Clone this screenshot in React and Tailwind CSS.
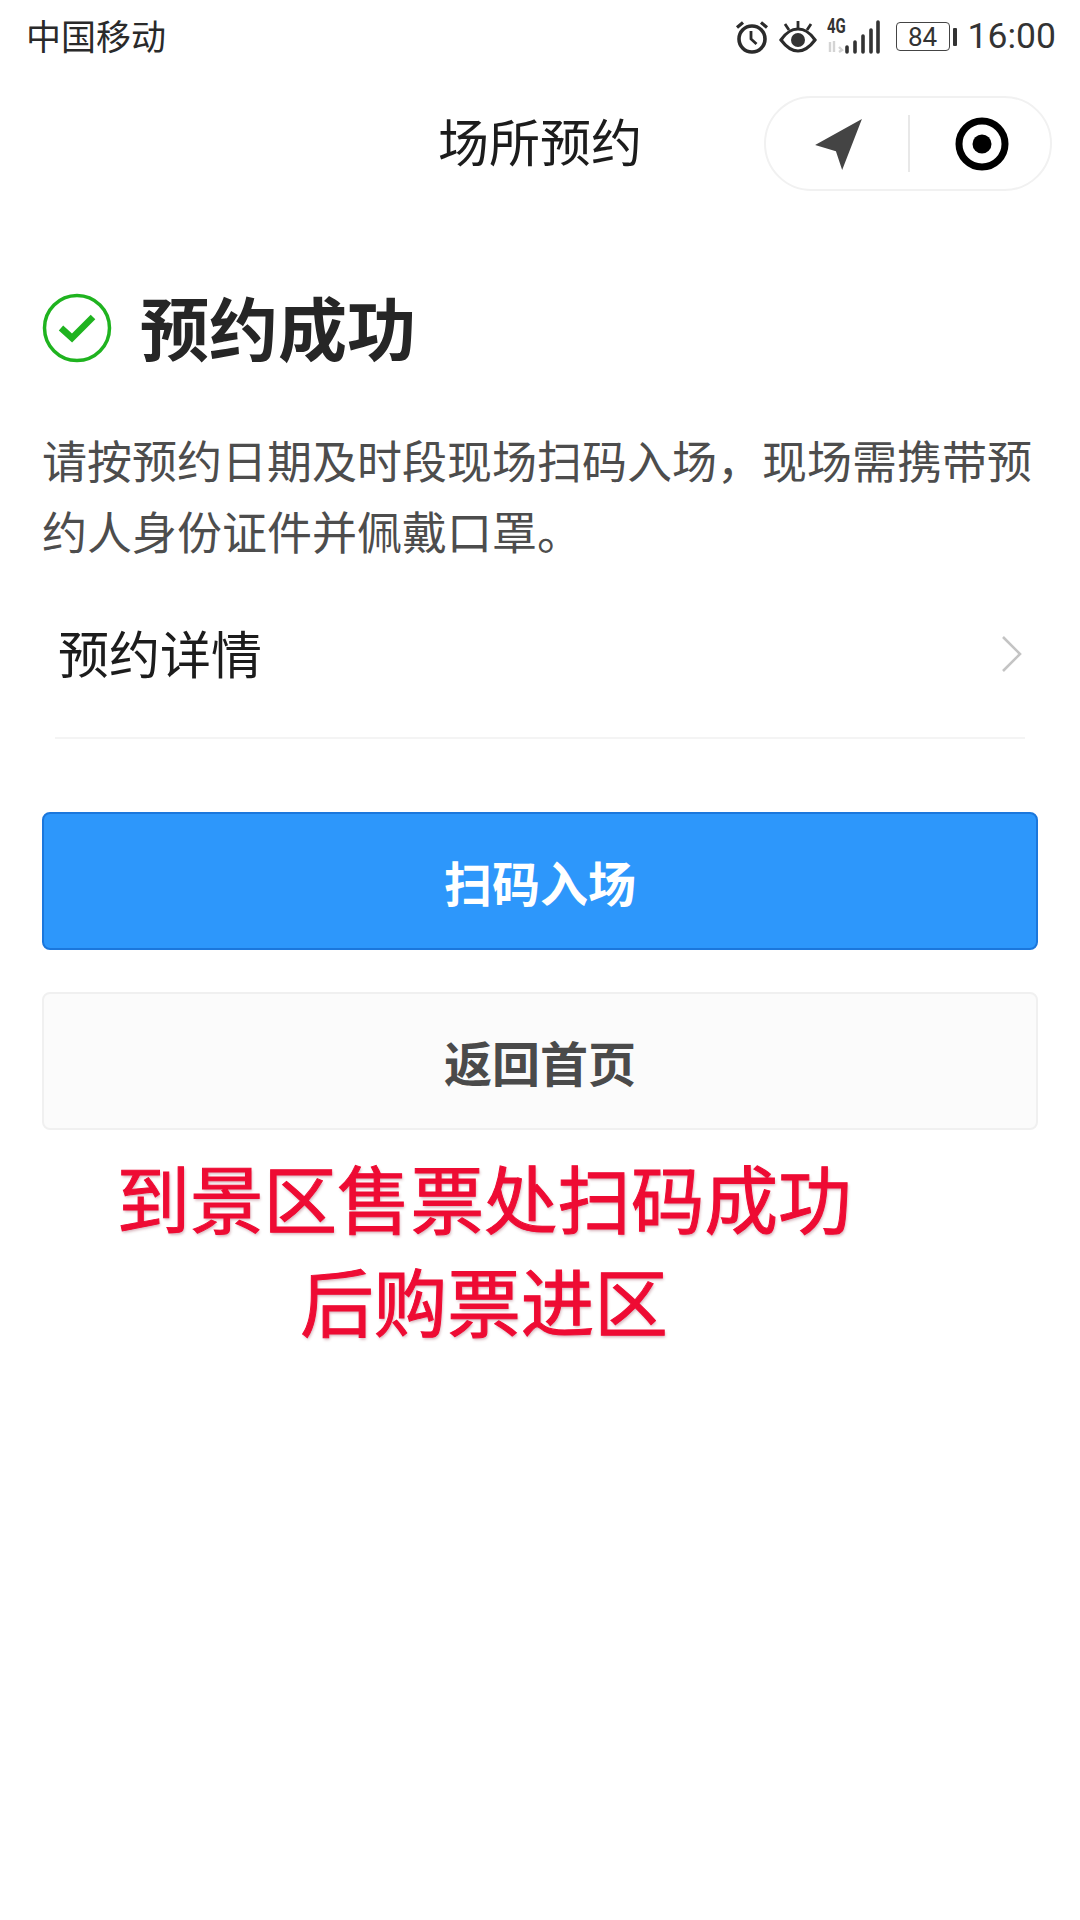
import React from "react";

const cjk = "font-['Noto_Sans_CJK_SC','Noto_Sans',sans-serif]";

function StatusIcons() {
  return (
    <div className="flex items-center mt-[3px]">
      <svg width="36" height="36" viewBox="0 0 36 36" className="mr-[9px]">
        <circle cx="18" cy="20" r="13" fill="none" stroke="#2b2b2b" strokeWidth="3.6" />
        <path d="M17 12v8l5.5 5" fill="none" stroke="#2b2b2b" strokeWidth="2.8" />
        <path d="M3 8.5 9 3.5M33 8.5 27 3.5" stroke="#2b2b2b" strokeWidth="3.2" />
      </svg>
      <svg width="38" height="36" viewBox="0 0 38 36" className="mr-[10px]">
        <path d="M2 21C8 12 13 10 19 10s11 2 17 11c-6 8-11 11-17 11S8 29 2 21Z" fill="none" stroke="#2b2b2b" strokeWidth="3.2" />
        <circle cx="19" cy="21" r="7" fill="#333" />
        <path d="M19 2v7M6 5l4 6M32 5l-4 6" stroke="#2b2b2b" strokeWidth="2.8" />
      </svg>
      <div className="relative w-[54px] h-[36px] mr-[15px]">
        <span className="absolute left-0 top-[-4px] text-[20px] leading-[22px] font-bold text-[#333] font-['Roboto',sans-serif] scale-x-75 origin-left">4G</span>
        <svg width="54" height="36" viewBox="0 0 54 36" className="absolute left-0 top-0">
          <path d="M3 33V23M7 33V22M12 28l3 3-3 2" stroke="#d4d4d4" strokeWidth="2.4" fill="none" />
          <path d="M21 28v5M29 23v10M37 17v16M45 11v22M52 3v30" transform="translate(-1 0)" stroke="#333" strokeWidth="3.6" strokeLinecap="round" />
        </svg>
      </div>
      <div className="w-[54px] h-[29px] border border-[#444] rounded-[4px] flex items-center justify-center text-[26px] leading-none text-[#333] font-['Roboto',sans-serif]">84</div>
      <div className="w-[4px] h-[18px] bg-[#333] rounded-[1px] ml-[3px] mr-[11px]" />
      <span className="text-[35.5px] leading-none text-[#333] font-['Roboto',sans-serif]">16:00</span>
    </div>
  );
}

function Button({ className, children }) {
  return (
    <div className={`mx-[42px] flex items-center justify-center rounded-[8px] border-2 font-bold text-[48px] leading-none ${className}`}>
      {children}
    </div>
  );
}

export default function App() {
  return (
    <div className={`w-[1080px] h-[1920px] bg-white overflow-hidden ${cjk}`}>
      <div className="h-[70px] flex items-center justify-between pl-[26px] pr-[24px]">
        <span className="text-[35px] leading-none text-[#2a2a2a] mb-[2px]">中国移动</span>
        <StatusIcons />
      </div>

      <div className="relative h-[95px] mt-[26px] flex items-center justify-center">
        <span className="text-[51px] leading-none text-[#1c1c1c] mb-[6px]">场所预约</span>
        <div className="absolute left-[764px] top-0 w-[288px] h-[95px] rounded-full border-2 border-[#f1f1f1] flex items-center">
          <div className="w-[142px] flex justify-center">
            <svg width="52" height="52" viewBox="0 0 50 50" className="ml-[2px]">
              <path d="M48 1 3 26l20 6 6 18Z" fill="#444" />
            </svg>
          </div>
          <div className="w-[2px] h-[57px] bg-[#e8e8e8]" />
          <div className="flex-1 flex justify-center">
            <svg width="54" height="54" viewBox="0 0 54 54" className="ml-[3px]">
              <circle cx="27" cy="27" r="23" fill="none" stroke="#000" strokeWidth="7" />
              <circle cx="27" cy="27" r="9.5" fill="#000" />
            </svg>
          </div>
        </div>
      </div>

      <div className="flex items-center mt-[94px] ml-[42px] h-[88px]">
        <svg width="70" height="70" viewBox="0 0 70 70" className="mb-[2px]">
          <circle cx="35" cy="35" r="32.5" fill="none" stroke="#1fb31f" strokeWidth="3.5" />
          <path d="M19 35l11 10 21-21" fill="none" stroke="#1fb31f" strokeWidth="6.5" />
        </svg>
        <h1 className="ml-[28px] mb-[6px] text-[69px] leading-none font-bold text-[#262626]">预约成功</h1>
      </div>

      <p className="mt-[51px] mx-[42px] w-[1000px] text-[45px] leading-[71px] text-[#4d4d4d]">
        请按预约日期及时段现场扫码入场，现场需携带预约人身份证件并佩戴口罩。
      </p>

      <div className="mx-[55px] mt-[9px] h-[164px] border-b-2 border-[#f4f4f4] flex items-center justify-between pb-[4px]">
        <span className="ml-[3px] mb-[4px] text-[51px] leading-none text-[#1c1c1c]">预约详情</span>
        <svg width="24" height="38" viewBox="0 0 24 38" className="mr-[1px]">
          <path d="M3 2l17 17L3 36" fill="none" stroke="#c4c4c4" strokeWidth="2.6" />
        </svg>
      </div>

      <Button className="mt-[73px] h-[138px] bg-[#2d97fb] border-[#1b77dc] text-white">扫码入场</Button>
      <Button className="mt-[42px] h-[138px] bg-[#fbfbfb] border-[#f0f0f0] text-[#4a4a4a]">返回首页</Button>

      <div className="mt-[15px] w-[968px] text-center text-[73.5px] leading-[103px] font-normal text-[#ee0b33] [text-shadow:1px_2px_3px_rgba(120,0,30,0.3)] [-webkit-text-stroke:1px_#ee0b33]">
        <div>到景区售票处扫码成功</div>
        <div>后购票进区</div>
      </div>
    </div>
  );
}
